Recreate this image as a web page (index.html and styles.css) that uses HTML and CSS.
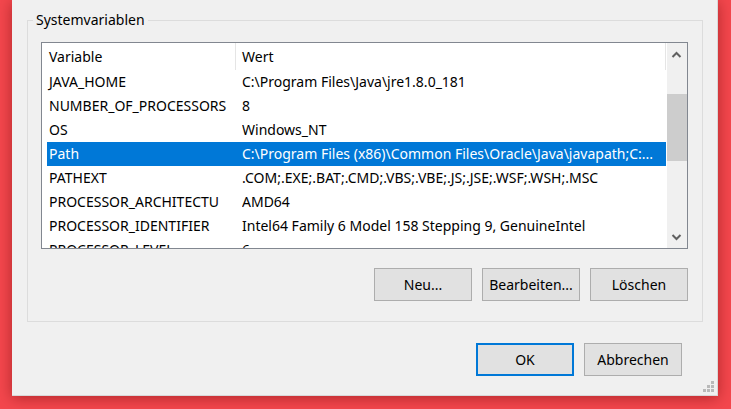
FILE: index.html
```html
<!DOCTYPE html>
<html lang="de">
<head>
<meta charset="utf-8">
<title>Umgebungsvariablen</title>
<link rel="stylesheet" href="styles.css">
</head>
<body>
<div class="dialog">
  <fieldset class="group">
    <legend class="group-label">Systemvariablen</legend>
    <div class="listbox">
      <div class="list">
        <div class="head">
          <div class="hc1">Variable</div>
          <div class="hc2">Wert</div>
        </div>
        <div class="rows">
          <div class="row"><div class="c1">JAVA_HOME</div><div class="c2">C:\Program Files\Java\jre1.8.0_181</div></div>
          <div class="row"><div class="c1">NUMBER_OF_PROCESSORS</div><div class="c2">8</div></div>
          <div class="row"><div class="c1">OS</div><div class="c2">Windows_NT</div></div>
          <div class="row selected"><div class="c1">Path</div><div class="c2">C:\Program Files (x86)\Common Files\Oracle\Java\javapath;C:...</div></div>
          <div class="row"><div class="c1">PATHEXT</div><div class="c2">.COM;.EXE;.BAT;.CMD;.VBS;.VBE;.JS;.JSE;.WSF;.WSH;.MSC</div></div>
          <div class="row"><div class="c1">PROCESSOR_ARCHITECTU</div><div class="c2">AMD64</div></div>
          <div class="row"><div class="c1">PROCESSOR_IDENTIFIER</div><div class="c2">Intel64 Family 6 Model 158 Stepping 9, GenuineIntel</div></div>
          <div class="row"><div class="c1">PROCESSOR_LEVEL</div><div class="c2">6</div></div>
        </div>
      </div>
      <div class="scrollbar">
        <div class="sb-btn">
          <svg width="20" height="20" viewBox="0 0 20 20"><path d="M5.5 14 L9.5 10 L13.5 14" fill="none" stroke="#606060" stroke-width="2"/></svg>
        </div>
        <div class="sb-track"><div class="sb-thumb"></div></div>
        <div class="sb-btn">
          <svg width="20" height="20" viewBox="0 0 20 20"><path d="M5.5 7 L9.5 11 L13.5 7" fill="none" stroke="#606060" stroke-width="2"/></svg>
        </div>
      </div>
    </div>
    <div class="btnrow">
      <button class="btn">Neu...</button>
      <button class="btn">Bearbeiten...</button>
      <button class="btn">Löschen</button>
    </div>
  </fieldset>
  <div class="footer">
    <button class="btn default">OK</button>
    <button class="btn">Abbrechen</button>
  </div>
  <div class="grip">
    <span class="dot d1"></span>
    <span class="dot d2"></span><span class="dot d3"></span>
    <span class="dot d4"></span><span class="dot d5"></span><span class="dot d6"></span>
  </div>
</div>
</body>
</html>
```

FILE: styles.css
```css
* { box-sizing: border-box; }
html, body { margin: 0; height: 100%; }
body {
  background: #f4474d;
  padding-left: 12px;
  overflow: hidden;
  font-family: "Noto Sans", "Liberation Sans", sans-serif;
  font-size: 14px;
  color: #000;
}
.dialog {
  position: relative;
  width: 706px;
  height: 396px;
  background: #f0f0f0;
  border-right: 1px solid #d8d8d8;
  border-bottom: 1px solid #d8d8d8;
  box-shadow: 0 2px 14px rgba(90, 0, 0, 0.45);
  padding-top: 10px;
}
.group {
  margin: 0 0 0 15px;
  width: 676px;
  border: 1px solid #dcdcdc;
  padding: 12px 14px 20px 13px;
  min-width: 0;
}
.group-label {
  padding: 0 3px;
  margin-left: -8px;
  line-height: 20px;
  height: 20px;
}
.listbox {
  display: flex;
  width: 647px;
  height: 207px;
  border: 1px solid #828790;
  background: #fff;
}
.list {
  width: 625px;
  overflow: hidden;
}
.head {
  display: flex;
  height: 27px;
  line-height: 27px;
}
.hc1 {
  width: 194px;
  padding-left: 7px;
  border-right: 1px solid #e5e5e5;
}
.hc2 {
  width: 430px;
  padding-left: 6px;
  border-right: 1px solid #e5e5e5;
}
.rows {
  height: 178px;
  overflow: hidden;
}
.row {
  display: flex;
  margin-left: 5px;
  width: 619px;
  height: 24px;
  line-height: 24px;
  white-space: nowrap;
}
.row.selected {
  background: #0078d7;
  color: #fff;
}
.c1 {
  width: 195px;
  flex: none;
  padding-left: 2px;
  overflow: hidden;
}
.c2 {
  flex: 1;
  overflow: hidden;
}
.scrollbar {
  width: 20px;
  display: flex;
  flex-direction: column;
  background: #f0f0f0;
}
.sb-btn {
  height: 20px;
  flex: none;
}
.sb-btn svg { display: block; }
.sb-track {
  flex: 1;
  padding-top: 31px;
}
.sb-thumb {
  height: 67px;
  background: #cdcdcd;
}
.btnrow {
  display: flex;
  justify-content: flex-end;
  gap: 10px;
  margin-top: 19px;
}
.btn {
  width: 98px;
  height: 33px;
  background: #e1e1e1;
  border: 1px solid #adadad;
  font-family: inherit;
  font-size: 14px;
  color: #000;
  padding: 0;
  margin: 0;
}
.btn.default {
  border: 2px solid #0078d7;
}
.footer {
  display: flex;
  justify-content: flex-end;
  gap: 10px;
  margin-top: 21px;
  padding-right: 35px;
}
.grip {
  position: absolute;
  right: 3px;
  bottom: 3px;
  width: 11px;
  height: 11px;
}
.dot {
  position: absolute;
  width: 3px;
  height: 3px;
  background: #b9b9b9;
}
.d1 { left: 8px; top: 0; }
.d2 { left: 4px; top: 4px; }
.d3 { left: 8px; top: 4px; }
.d4 { left: 0; top: 8px; }
.d5 { left: 4px; top: 8px; }
.d6 { left: 8px; top: 8px; }
```
